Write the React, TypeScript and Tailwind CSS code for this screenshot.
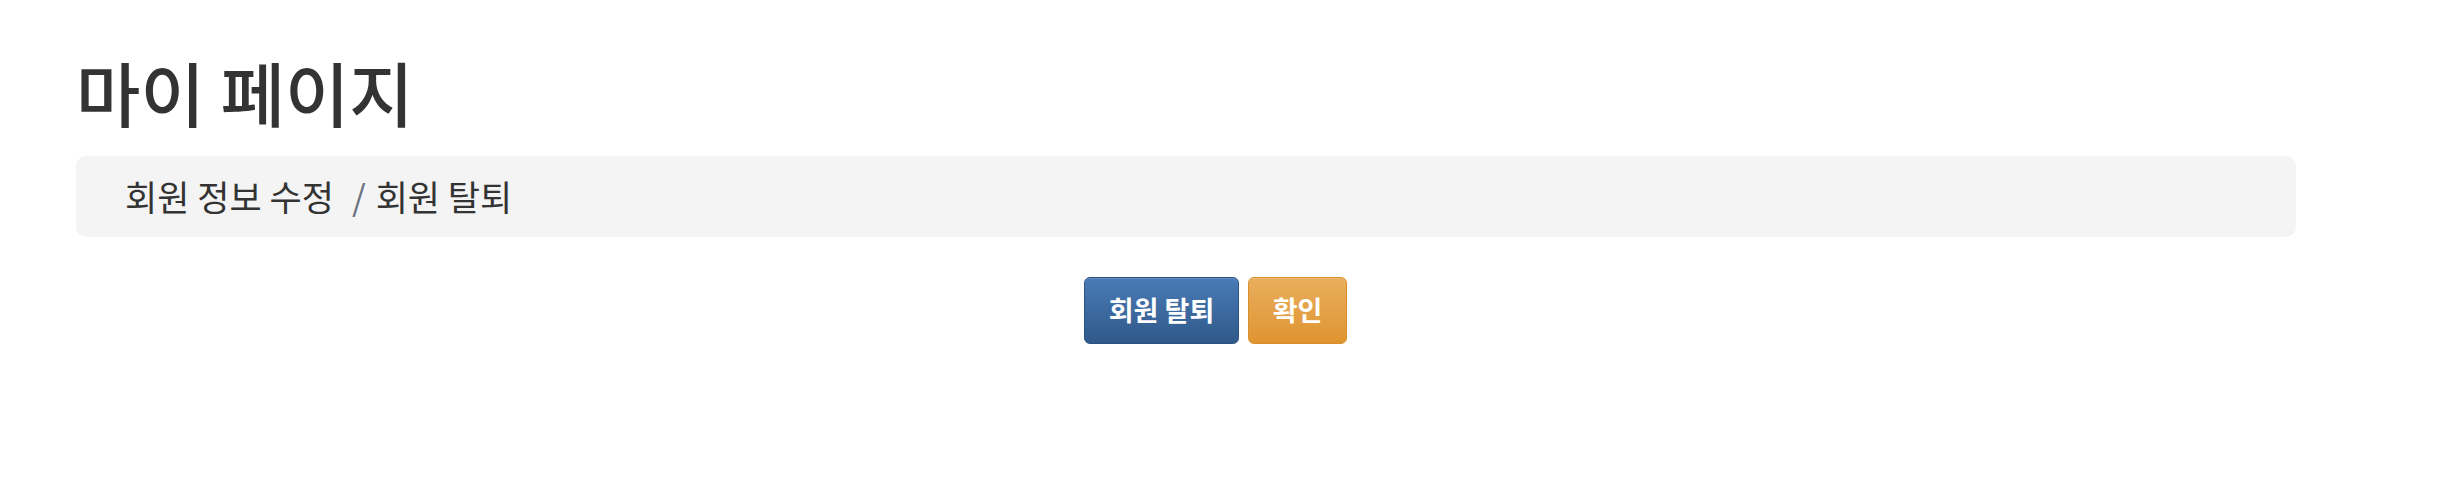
export default function App() {
  return (
    <div className="min-h-[490px] bg-white font-['Noto_Sans_CJK_KR','Noto_Sans',sans-serif] text-[#333]">
      <div className="pl-[76px] pr-[150px] pt-[48px]">
        <h1 className="text-[70px] font-medium leading-[88px]">마이 페이지</h1>
        <div className="mt-[20px] flex h-[81px] items-center rounded-[10px] bg-[#f4f4f4] pl-[49px] text-[35px]">
          <span>회원 정보 수정</span>
          <span className="ml-[18px] mr-[10px] text-[#6b7280]">/</span>
          <span>회원 탈퇴</span>
        </div>
      </div>
      <div className="mt-[40px] flex justify-center gap-[9px] pr-[15px]">
        <button className="h-[67px] w-[155px] rounded-[6px] border border-[#2a5283] bg-gradient-to-b from-[#4a7bb6] to-[#30598a] text-[27px] font-semibold text-white shadow-[inset_0_1px_0_rgba(255,255,255,0.15)]">
          회원 탈퇴
        </button>
        <button className="h-[67px] w-[99px] rounded-[6px] border border-[#d98f2b] bg-gradient-to-b from-[#e9ae5c] to-[#df952f] text-[27px] font-semibold text-white shadow-[inset_0_1px_0_rgba(255,255,255,0.15)]">
          확인
        </button>
      </div>
    </div>
  );
}
